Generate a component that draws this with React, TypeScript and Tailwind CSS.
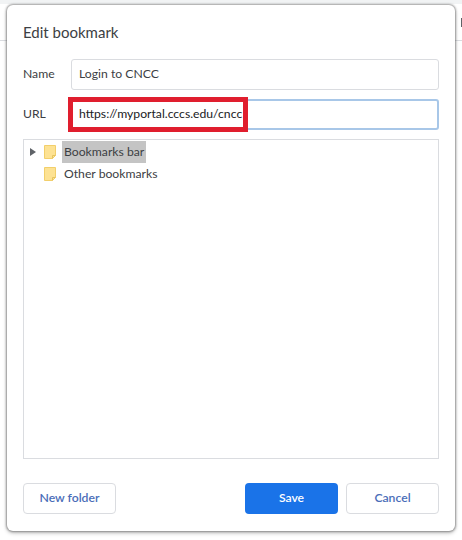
export default function App() {
  const font = { fontFamily: 'Lato, sans-serif' };
  return (
    <div className="relative h-[540px] w-[462px] overflow-hidden bg-white text-[12.2px] text-[#3c4043]" style={font}>
      {/* page behind the dialog */}
      <div className="h-[41px] border-t-[4px] border-b border-t-[#f1f3f4] border-b-[#dadce0] bg-white" />
      <div className="absolute right-0 top-[18px] h-[9px] w-px bg-[#5f6368]" />

      {/* dialog */}
      <div className="absolute left-[7px] top-[5px] flex h-[526px] w-[448px] flex-col rounded-[6px] bg-white px-[16px] pt-[17px] pb-[17px] shadow-[0_0_2px_1px_rgba(90,90,90,0.55),0_2px_4px_rgba(0,0,0,0.25)]">
        <h1 className="h-[20px] text-[15px] leading-[20px] text-[#3c4043]">Edit bookmark</h1>

        <div className="mt-[17px] flex h-[31px] items-center">
          <label className="w-[48px]">Name</label>
          <div className="flex h-full flex-1 items-center rounded-[3px] border border-[#dadce0] px-[7px]">Login to CNCC</div>
        </div>

        <div className="relative mt-[9px] flex h-[31px] items-center">
          <label className="w-[48px]">URL</label>
          <div className="flex h-full flex-1 items-center rounded-[3px] border-2 border-[#a8c7e8] px-[6px] text-[#202124]">
            https://myportal.cccs.edu/cncc
          </div>
          {/* red annotation drawn over the field */}
          <div className="absolute left-[45px] top-[-2px] h-[35px] w-[180px] border-[5px] border-[#e01e2e]" />
        </div>

        <div className="mt-[9px] h-[320px] border border-[#dadce0] pt-[1px]">
          <div className="flex h-[22px] items-center">
            <svg width="6" height="8" viewBox="0 0 6 8" className="ml-[6px]">
              <path d="M0 0L6 4L0 8Z" fill="#5f6368" />
            </svg>
            <Folder className="ml-[8px]" />
            <span className="ml-[6px] flex h-[22px] items-center bg-[#c4c4c4] px-[2px]">Bookmarks bar</span>
          </div>
          <div className="flex h-[22px] items-center">
            <Folder className="ml-[20px]" />
            <span className="ml-[6px] px-[2px]">Other bookmarks</span>
          </div>
        </div>

        <div className="mt-auto flex h-[31px] items-stretch font-semibold">
          <button className="w-[93px] rounded-[4px] border border-[#dadce0] text-[#4a6db8]">New folder</button>
          <button className="ml-auto w-[93px] rounded-[4px] bg-[#1a73e8] text-white">Save</button>
          <button className="ml-[8px] w-[93px] rounded-[4px] border border-[#dadce0] text-[#4a6db8]">Cancel</button>
        </div>
      </div>
    </div>
  );
}

function Folder({ className }: { className?: string }) {
  return (
    <svg width="12" height="14" viewBox="0 0 12 14" className={className}>
      <path d="M0.5 0.5H11.5V10.5L8.5 13.5H0.5Z" fill="#fde293" stroke="#f2cf6b" />
      <path d="M8.5 13.5V10.5H11.5" fill="none" stroke="#e6c45f" />
    </svg>
  );
}
